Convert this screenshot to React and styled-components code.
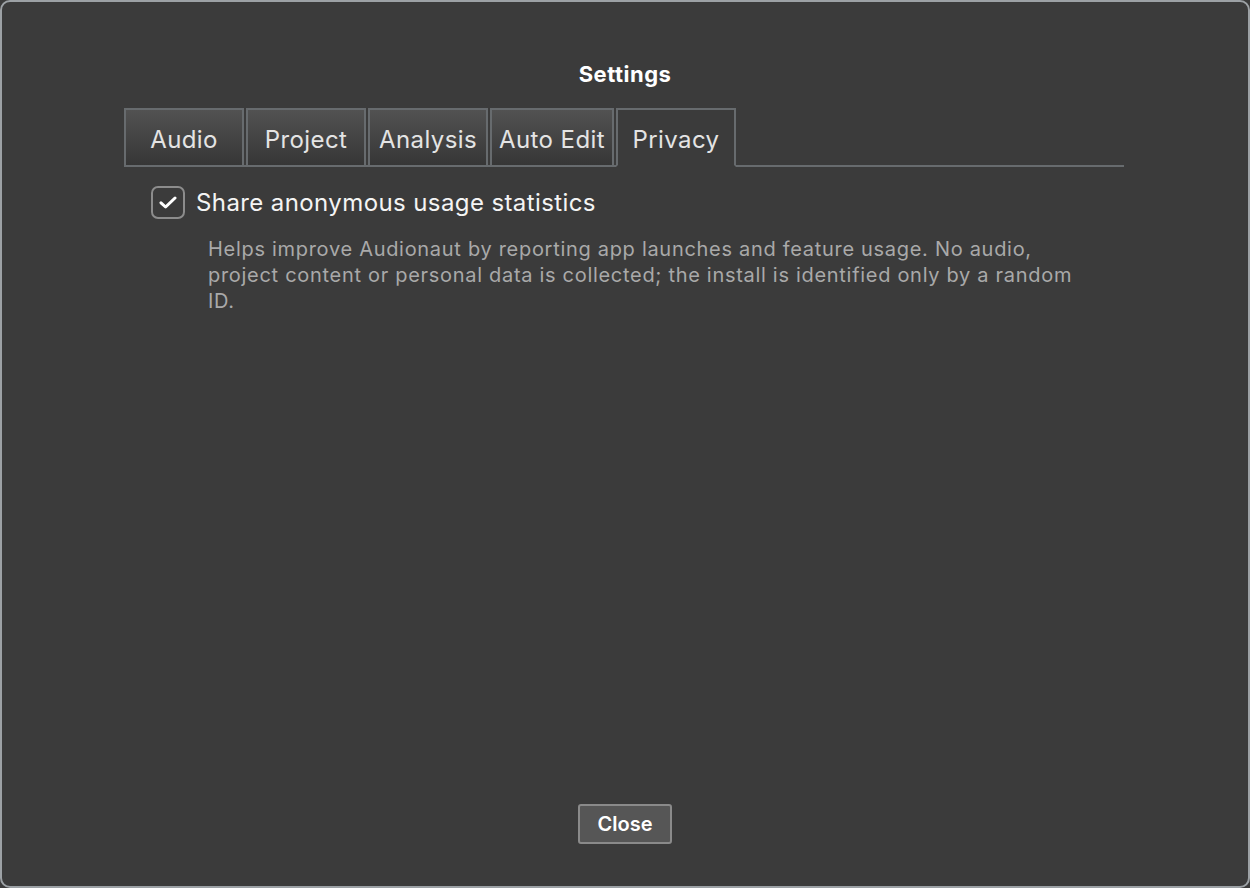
import { useState } from "react";
import styled, { createGlobalStyle } from "styled-components";

const GlobalStyle = createGlobalStyle`
  html, body {
    margin: 0;
    padding: 0;
    background: #3b3b3b;
  }
  body {
    font-family: Inter, "Noto Sans", "Liberation Sans", sans-serif;
  }
`;

const Window = styled.div`
  box-sizing: border-box;
  width: 1250px;
  height: 888px;
  border: 2px solid #9ca1a5;
  border-radius: 10px;
  background: #3b3b3b;
  display: flex;
  flex-direction: column;
  overflow: hidden;
`;

const Title = styled.h1`
  margin: 0;
  padding-top: 60px;
  text-align: center;
  font-size: 22px;
  line-height: 24px;
  letter-spacing: 0.5px;
  font-weight: 700;
  color: #ffffff;
`;

const TabBar = styled.div`
  display: flex;
  gap: 2px;
  margin: 22px 124px 0 122px;
  border-bottom: 2px solid #676b6e;
`;

const Tab = styled.button`
  box-sizing: border-box;
  width: ${(p) => p.$width}px;
  height: 59px;
  margin-bottom: -2px;
  padding: 3px 0 0;
  font-family: inherit;
  font-size: 24px;
  letter-spacing: 0.4px;
  white-space: nowrap;
  color: #e4e4e4;
  border: 2px solid #676b6e;
  border-bottom-color: ${(p) => (p.$active ? "#3b3b3b" : "#676b6e")};
  background: ${(p) =>
    p.$active ? "#3b3b3b" : "linear-gradient(#525252, #363636)"};
  cursor: pointer;
`;

const Content = styled.div`
  flex: 1;
  padding: 19px 0 0 149px;
`;

const CheckRow = styled.label`
  display: flex;
  align-items: center;
  gap: 11px;
  cursor: pointer;
`;

const Box = styled.span`
  box-sizing: border-box;
  width: 34px;
  height: 33px;
  border: 2px solid #8c8c8c;
  border-radius: 7px;
  display: flex;
  align-items: center;
  justify-content: center;
`;

const Label = styled.span`
  font-size: 24px;
  line-height: 32px;
  letter-spacing: 0.4px;
  color: #f4f4f4;
`;

const Description = styled.p`
  margin: 17px 0 0 57px;
  max-width: 880px;
  font-size: 20px;
  line-height: 26px;
  letter-spacing: 0.7px;
  color: #a9a9a9;
`;

const Footer = styled.div`
  display: flex;
  justify-content: center;
  padding-bottom: 42px;
`;

const CloseButton = styled.button`
  box-sizing: border-box;
  width: 94px;
  height: 40px;
  font-family: inherit;
  font-size: 20px;
  font-weight: 600;
  color: #ffffff;
  background: #565656;
  border: 2px solid #8a8a8a;
  border-radius: 3px;
  cursor: pointer;
`;

const tabs = [
  { name: "Audio", width: 120 },
  { name: "Project", width: 120 },
  { name: "Analysis", width: 120 },
  { name: "Auto Edit", width: 124 },
  { name: "Privacy", width: 120 },
];

export default function App() {
  const [active, setActive] = useState("Privacy");
  const [checked, setChecked] = useState(true);

  return (
    <Window>
      <GlobalStyle />
      <Title>Settings</Title>
      <TabBar>
        {tabs.map((t) => (
          <Tab
            key={t.name}
            $width={t.width}
            $active={active === t.name}
            onClick={() => setActive(t.name)}
          >
            {t.name}
          </Tab>
        ))}
      </TabBar>
      <Content>
        <CheckRow onClick={() => setChecked(!checked)}>
          <Box>
            {checked && (
              <svg width="18" height="13" viewBox="0 0 18 13">
                <path
                  d="M2 6.8 L6.6 11 L16 2"
                  fill="none"
                  stroke="#ffffff"
                  strokeWidth="3"
                  strokeLinecap="round"
                  strokeLinejoin="round"
                />
              </svg>
            )}
          </Box>
          <Label>Share anonymous usage statistics</Label>
        </CheckRow>
        <Description>
          Helps improve Audionaut by reporting app launches and feature usage.
          No audio, project content or personal data is collected; the install
          is identified only by a random ID.
        </Description>
      </Content>
      <Footer>
        <CloseButton>Close</CloseButton>
      </Footer>
    </Window>
  );
}
